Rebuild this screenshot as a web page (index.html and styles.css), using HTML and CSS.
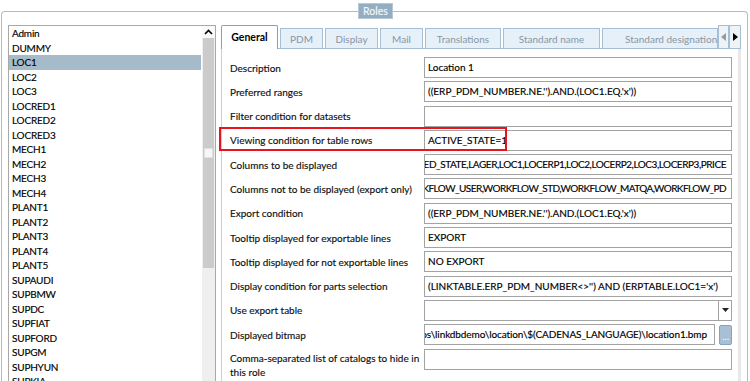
FILE: index.html
```html
<!DOCTYPE html>
<html>
<head>
<meta charset="utf-8">
<link rel="stylesheet" href="styles.css">
</head>
<body>
<div class="group">
  <div class="legend">Roles</div>
  <div class="list">
    <div class="items">
      <div class="item">Admin</div>
      <div class="item">DUMMY</div>
      <div class="item sel">LOC1</div>
      <div class="item">LOC2</div>
      <div class="item">LOC3</div>
      <div class="item">LOCRED1</div>
      <div class="item">LOCRED2</div>
      <div class="item">LOCRED3</div>
      <div class="item">MECH1</div>
      <div class="item">MECH2</div>
      <div class="item">MECH3</div>
      <div class="item">MECH4</div>
      <div class="item">PLANT1</div>
      <div class="item">PLANT2</div>
      <div class="item">PLANT3</div>
      <div class="item">PLANT4</div>
      <div class="item">PLANT5</div>
      <div class="item">SUPAUDI</div>
      <div class="item">SUPBMW</div>
      <div class="item">SUPDC</div>
      <div class="item">SUPFIAT</div>
      <div class="item">SUPFORD</div>
      <div class="item">SUPGM</div>
      <div class="item">SUPHYUN</div>
      <div class="item">SUPKIA</div>
    </div>
    <div class="sb">
      <div class="sb-up"><svg width="9" height="6" viewBox="0 0 9 6"><polyline points="1,5 4.5,1.5 8,5" fill="none" stroke="#000" stroke-width="1.6"/></svg></div>
      <div class="sb-thumb"><div class="grip"></div></div>
    </div>
  </div>
  <div class="tabs">
    <div class="strip">
      <div class="tab active w-gen">General</div>
      <div class="tab w-pdm">PDM</div>
      <div class="tab w-disp">Display</div>
      <div class="tab w-mail">Mail</div>
      <div class="tab w-tr">Translations</div>
      <div class="tab w-sn">Standard name</div>
      <div class="tab w-sd">Standard designation</div>
      <div class="arrow w-al"><svg width="5" height="8" viewBox="0 0 5 8"><polygon points="5,0 0,4 5,8" fill="#9a9a9a"/></svg></div>
      <div class="arrow w-ar"><svg width="5" height="8" viewBox="0 0 5 8"><polygon points="0,0 5,4 0,8" fill="#000"/></svg></div>
    </div>
    <div class="panel">
      <div class="form">
        <div class="lbl">Description</div>
        <div class="inp">Location 1</div>
        <div class="lbl">Preferred ranges</div>
        <div class="inp">((ERP_PDM_NUMBER.NE.'').AND.(LOC1.EQ.'x'))</div>
        <div class="lbl">Filter condition for datasets</div>
        <div class="inp"></div>
        <div class="lbl">Viewing condition for table rows</div>
        <div class="inp">ACTIVE_STATE=1</div>
        <div class="lbl">Columns to be displayed</div>
        <div class="inp scrolled tight"><span>RELEASED_STATE,LAGER,LOC1,LOCERP1,LOC2,LOCERP2,LOC3,LOCERP3,PRICE</span></div>
        <div class="lbl">Columns not to be displayed (export only)</div>
        <div class="inp scrolled tighter"><span>WORKFLOW_USER,WORKFLOW_STD,WORKFLOW_MATQA,WORKFLOW_PD</span></div>
        <div class="lbl">Export condition</div>
        <div class="inp">((ERP_PDM_NUMBER.NE.'').AND.(LOC1.EQ.'x'))</div>
        <div class="lbl">Tooltip displayed for exportable lines</div>
        <div class="inp">EXPORT</div>
        <div class="lbl">Tooltip displayed for not exportable lines</div>
        <div class="inp">NO EXPORT</div>
        <div class="lbl">Display condition for parts selection</div>
        <div class="inp">(LINKTABLE.ERP_PDM_NUMBER&lt;&gt;'') AND (ERPTABLE.LOC1='x')</div>
        <div class="lbl">Use export table</div>
        <div class="combo"><div class="combo-text"></div><div class="combo-btn"><svg width="7" height="4" viewBox="0 0 7 4"><polygon points="0,0 7,0 3.5,4" fill="#222"/></svg></div></div>
        <div class="lbl">Displayed bitmap</div>
        <div class="browse"><div class="inp scrolled path"><span>photos\linkdbdemo\location\$(CADENAS_LANGUAGE)\location1.bmp</span></div><div class="dots">...</div></div>
        <div class="lbl top">Comma-separated list of catalogs to hide in<br>this role</div>
        <div class="inp"></div>
      </div>
      <div class="highlight"></div>
    </div>
  </div>
</div>
</body>
</html>
```
FILE: styles.css
```css
html, body {
  margin: 0;
  padding: 0;
}
body {
  width: 750px;
  height: 381px;
  overflow: hidden;
  background: #fff;
  font-family: Lato, "Liberation Sans", sans-serif;
  font-size: 10px;
  color: #000;
  -webkit-text-stroke: 0.15px currentColor;
}
.group {
  position: relative;
  box-sizing: border-box;
  margin: 11px 2px 0 1px;
  height: 370px;
  border: 1px solid #a9bdcd;
  border-bottom: none;
  border-radius: 4px 4px 0 0;
  padding: 13px 0 0 6px;
  display: flex;
  align-items: flex-start;
}
.legend {
  position: absolute;
  left: 356px;
  top: -9px;
  width: 35px;
  height: 16px;
  box-sizing: border-box;
  border: 1px solid #b7c8d6;
  background: #93adc3;
  color: #f4f7fa;
  font-size: 10.5px;
  line-height: 14px;
  text-align: center;
}
.list {
  width: 208px;
  height: 357px;
  box-sizing: border-box;
  border: 1px solid #a8a8a8;
  border-bottom: none;
  display: flex;
  overflow: hidden;
}
.items {
  width: 193px;
}
.item {
  height: 14.5px;
  line-height: 14.5px;
  padding-left: 3px;
  white-space: nowrap;
  font-size: 10px;
  letter-spacing: -0.2px;
}
.item.sel {
  background: #a6bbc9;
}
.sb {
  width: 13px;
  margin-left: 1px;
  background: #efefef;
  display: flex;
  flex-direction: column;
}
.sb-up {
  height: 12px;
  display: flex;
  align-items: center;
  justify-content: center;
  background: #fafafa;
}
.sb-thumb {
  height: 230px;
  margin: 0 1px;
  background: #cbcbcb;
  display: flex;
  align-items: center;
  justify-content: center;
}
.grip {
  width: 7px;
  height: 8px;
  background: #f7f7f7;
  border: 1px solid #e0e0e0;
}
.tabs {
  width: 520px;
  margin-left: 5px;
  display: flex;
  flex-direction: column;
}
.strip {
  height: 23px;
  display: flex;
  align-items: flex-end;
}
.tab {
  box-sizing: border-box;
  height: 20px;
  margin-left: 2px;
  border: 1px solid #a6bfd4;
  border-bottom: none;
  background: #e6f0f9;
  color: #8796a5;
  line-height: 20px;
  text-align: center;
  white-space: nowrap;
  overflow: hidden;
  -webkit-text-stroke: 0;
}
.tab.active {
  height: 24px;
  margin-left: 0;
  margin-bottom: -1px;
  position: relative;
  z-index: 1;
  background: #fff;
  border-color: #9c9c9c;
  border-radius: 2px 2px 0 0;
  color: #000;
  font-weight: bold;
  font-size: 10.5px;
  line-height: 23px;
}
.w-gen { width: 57px; }
.w-pdm { width: 43px; }
.w-disp { width: 53px; }
.w-mail { width: 43px; }
.w-tr { width: 76px; }
.w-sn { width: 97px; }
.w-sd { width: 116px; text-align: left; padding-left: 22px; }
.arrow {
  box-sizing: border-box;
  height: 24px;
  margin-bottom: -1px;
  border: 1px solid #a6bfd4;
  background: #eef3f8;
  display: flex;
  align-items: center;
  justify-content: center;
  position: relative;
  z-index: 1;
}
.w-al { width: 11px; }
.w-ar { width: 12px; }
.panel {
  position: relative;
  height: 340px;
  box-sizing: border-box;
  border-top: 1px solid #a6bfd4;
  border-left: 1px solid #cfcfcf;
  border-right: 3px solid #e8e8e8;
  padding: 8px 0 0 8px;
}
.form {
  display: grid;
  grid-template-columns: 194px 308px;
  grid-auto-rows: 21px;
  row-gap: 3.3px;
}
.lbl {
  align-self: center;
  white-space: nowrap;
  color: #111;
}
.lbl.top {
  align-self: start;
  line-height: 14.5px;
  padding-top: 2px;
}
.inp {
  box-sizing: border-box;
  height: 21px;
  border: 1px solid #a3a3a3;
  background: #fff;
  padding: 0 3px;
  line-height: 19px;
  white-space: nowrap;
  overflow: hidden;
}
.inp.scrolled {
  display: flex;
  justify-content: flex-end;
  padding: 0 5px 0 0;
  letter-spacing: -0.25px;
}
.inp.scrolled span {
  flex: none;
}
.inp.tight {
  letter-spacing: -0.45px;
}
.inp.tighter {
  letter-spacing: -0.55px;
}
.inp.path {
  width: 291px;
  padding-right: 7px;
  letter-spacing: -0.1px;
}
.combo {
  box-sizing: border-box;
  height: 21px;
  border: 1px solid #a3a3a3;
  display: flex;
}
.combo-text {
  flex: 1;
}
.combo-btn {
  width: 12px;
  border-left: 1px solid #a3a3a3;
  display: flex;
  align-items: center;
  justify-content: center;
}
.browse {
  display: flex;
  align-items: center;
  justify-content: space-between;
}
.dots {
  box-sizing: border-box;
  width: 13px;
  height: 20px;
  background: #a9bfd4;
  border: 1px solid #86a3bd;
  border-radius: 2px;
  color: #fff;
  font-size: 10px;
  line-height: 20px;
  text-align: center;
  -webkit-text-stroke: 0;
}
.highlight {
  position: absolute;
  left: -3px;
  top: 78px;
  width: 288px;
  height: 24px;
  box-sizing: border-box;
  border: 2px solid #e8141c;
}
```
